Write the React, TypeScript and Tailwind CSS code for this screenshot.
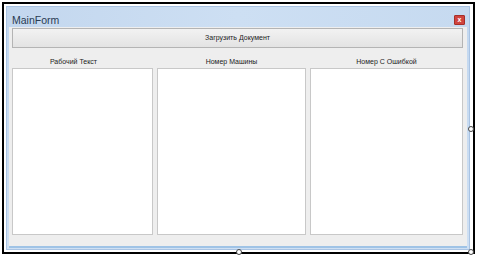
import React from "react";

const font = { fontFamily: "'Liberation Sans', Arial, sans-serif" };

function Handle({ className }: { className: string }) {
  return (
    <div
      className={`absolute w-[6px] h-[6px] rounded-full border border-[#444] bg-white ${className}`}
    />
  );
}

export default function App() {
  return (
    <div className="w-[477px] h-[257px] bg-white pt-[2px] pl-[2px] pr-[2px] pb-[3px]" style={font}>
      <div className="relative h-full border-2 border-black bg-white pl-[2px] pt-[2px] pr-[3px] pb-[2px]">
        <div className="flex h-full flex-col bg-gradient-to-b from-[#c2d7ef] to-[#cfe0f3] border border-[#a9c3e3]">
          {/* title bar */}
          <div className="flex h-[20px] shrink-0 items-center justify-between bg-gradient-to-r from-[#c3d7ee] via-[#cddff3] to-[#c6daf0] pl-[5px] pr-[4px]">
            <span className="text-[10.5px] leading-none text-[#2a3b52] pt-[6px]">MainForm</span>
            <div className="mt-[5px] flex h-[10px] w-[11px] items-center justify-center rounded-[1px] bg-[#d0443e] border border-[#a52f29]">
              <span className="text-[7px] leading-none text-white font-bold">x</span>
            </div>
          </div>
          {/* client area */}
          <div className="mx-[2px] mb-[1px] flex flex-1 flex-col bg-[#eeeeee] pl-[3px] pr-[4px] pt-[1px] border-b-[2px] border-[#9fc3e6]">
            <div className="flex h-[20px] items-center justify-center border border-[#b4b4b4] bg-gradient-to-b from-[#f2f2f2] to-[#e3e3e3] text-[7px] text-[#222]">
              Загрузить Документ
            </div>
            <div className="flex h-[20px] items-end pb-[1px] text-[7px] text-[#222]">
              <div className="w-[141px] pr-[18px] text-center">Рабочий Текст</div>
              <div className="ml-[4px] w-[149px] text-center">Номер Машины</div>
              <div className="ml-[4px] flex-1 text-center">Номер С Ошибкой</div>
            </div>
            <div className="flex h-[167px] gap-[4px]">
              <div className="w-[141px] border border-[#c8c8c8] bg-white" />
              <div className="w-[149px] border border-[#c8c8c8] bg-white" />
              <div className="flex-1 border border-[#c8c8c8] bg-white" />
            </div>
          </div>
        </div>
        <Handle className="left-[464px] top-[122px]" />
        <Handle className="left-[232px] top-[245px]" />
        <Handle className="left-[464px] top-[245px]" />
      </div>
    </div>
  );
}
